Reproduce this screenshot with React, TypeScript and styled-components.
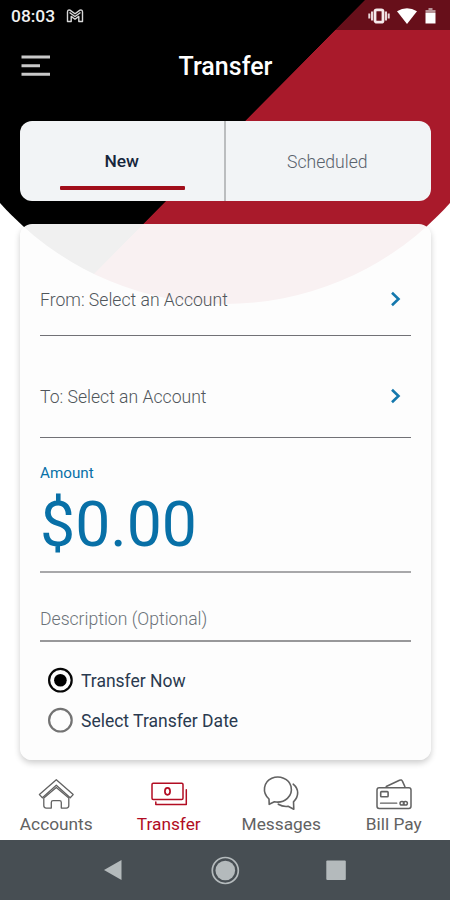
import React from "react";
import styled, { createGlobalStyle } from "styled-components";

const GlobalStyle = createGlobalStyle`
  * { box-sizing: border-box; }
  body { margin: 0; background: #fff; font-family: Roboto, sans-serif; }
  svg { display: block; flex: none; }
`;

const Screen = styled.div`
  position: relative;
  width: 450px;
  height: 900px;
  overflow: hidden;
  background: #fff;
  display: flex;
  flex-direction: column;
`;

const Backdrop = styled.div`
  position: absolute;
  left: -76px;
  top: -298px;
  width: 602px;
  height: 602px;
  border-radius: 50%;
  background: linear-gradient(134.7deg, #000 61.4%, #a91a2b 61.48%);
`;

const StatusBar = styled.div`
  position: relative;
  height: 30px;
  flex: none;
  padding: 2px 12px 0 11px;
  display: flex;
  align-items: center;
  background: rgba(0, 0, 0, 0.39);
  color: #fff;
`;

const Clock = styled.span`
  font-size: 17.4px;
  line-height: 28px;
  font-weight: 500;
  width: 55px;
  color: #f1f1f1;
`;

const StatusIcons = styled.div`
  margin-left: auto;
  display: flex;
  align-items: center;
  gap: 7px;
`;

const Header = styled.header`
  position: relative;
  height: 91px;
  flex: none;
  display: grid;
  grid-template-columns: 30px 1fr 30px;
  padding: 16px 20px 0 21px;
`;

const MenuButton = styled.button`
  border: 0;
  padding: 0;
  background: none;
  width: 30px;
  height: 40px;
  display: flex;
  align-items: center;
`;

const Title = styled.h1`
  margin: 0;
  text-align: center;
  font-size: 25px;
  line-height: 41px;
  font-weight: 500;
  color: #fff;
`;

const Tabs = styled.div`
  position: relative;
  flex: none;
  margin: 0 19px 0 20px;
  height: 80px;
  display: flex;
  border-radius: 12px;
  overflow: hidden;
  background: #f2f4f6;
`;

const Tab = styled.button<{ $active?: boolean }>`
  flex: 1;
  border: 0;
  padding: 0;
  background: none;
  display: flex;
  flex-direction: column;
  align-items: center;
  font-family: inherit;
  font-size: ${(p) => (p.$active ? "17.4px" : "17.6px")};
  line-height: 20px;
  padding-top: ${(p) => (p.$active ? 30 : 31)}px;
  font-weight: ${(p) => (p.$active ? 500 : 300)};
  color: ${(p) => (p.$active ? "#17263c" : "#59626c")};
  & + & { border-left: 2px solid #bbbdbf; padding-right: 2px; }
`;

const TabMarker = styled.span`
  width: 125px;
  height: 4px;
  border-radius: 1px;
  margin: 15px 0 0 2px;
  background: #a10e1a;
`;

const Card = styled.main`
  position: relative;
  flex: none;
  margin: 23px 19px 0 20px;
  height: 536px;
  padding: 0 20px;
  border-radius: 12px;
  background: rgba(253, 253, 253, 0.95);
  box-shadow: 0 3px 6px rgba(0, 0, 0, 0.2);
  clip-path: inset(0 -10px -12px -10px);
`;

const AccountRow = styled.div<{ $height: number; $pad: number }>`
  height: ${(p) => p.$height}px;
  padding: ${(p) => p.$pad}px 9px 0 0;
  display: flex;
  justify-content: space-between;
  border-bottom: 1.5px solid #717176;
  font-size: 17.6px;
  line-height: 22px;
  font-weight: 300;
  color: #50565b;
  svg { margin-top: 1px; }
`;

const AmountField = styled.div`
  height: 135px;
  padding-top: 25px;
  border-bottom: 2px solid #a8a8aa;
  color: #0870a7;
`;

const AmountLabel = styled.div`
  font-size: 15.2px;
  line-height: 20px;
`;

const AmountValue = styled.div`
  font-size: 62.5px;
  line-height: 72px;
  margin-top: 6px;
`;

const DescriptionField = styled.div`
  height: 69px;
  padding-top: 35px;
  border-bottom: 2px solid #98989a;
  font-size: 17.6px;
  line-height: 22px;
  font-weight: 300;
  color: #6b7278;
`;

const Options = styled.div`
  padding: 18px 0 0 7px;
`;

const Option = styled.label`
  height: 40px;
  display: flex;
  align-items: center;
  gap: 8px;
  font-size: 17.5px;
  line-height: 22px;
  color: #2a3a4f;
  span { padding-top: 2px; }
`;

const BottomTabs = styled.nav`
  position: relative;
  height: 80px;
  flex: none;
  display: grid;
  grid-template-columns: repeat(4, 1fr);
`;

const BottomTab = styled.a<{ $active?: boolean }>`
  display: flex;
  flex-direction: column;
  align-items: center;
  padding-top: 14px;
  font-size: 17.3px;
  line-height: 20px;
  color: ${(p) => (p.$active ? "#b20d23" : "#626262")};
  svg { margin-bottom: 1px; }
`;

const SystemBar = styled.footer`
  height: 60px;
  flex: none;
  display: grid;
  grid-template-columns: repeat(3, 111px);
  justify-content: center;
  justify-items: center;
  align-items: center;
  background: #474e53;
`;

const Chevron = () => (
  <svg width="12" height="18" viewBox="0 0 12 18" fill="none" stroke="#1478ad" strokeWidth="2.6">
    <path d="M2 2.7 8.5 9 2 15.3" />
  </svg>
);

const Radio = ({ checked }: { checked?: boolean }) => (
  <svg width="26" height="26" viewBox="0 0 26 26" fill="none">
    <circle cx="13.4" cy="13.2" r="11.3" stroke={checked ? "#070707" : "#737373"} strokeWidth="2.2" />
    {checked && <circle cx="13.4" cy="13.2" r="6.3" fill="#000" />}
  </svg>
);

const line = { fill: "none", stroke: "currentColor", strokeLinejoin: "round", strokeLinecap: "round" } as const;

const HouseIcon = () => (
  <svg width="38" height="39" viewBox="0 0 38 39" {...line} strokeWidth="1.3">
    <path d="M19.3 5.7 2.4 20.6l3 3.2L19.3 11.2l13.9 12.6 3-3.2Z" />
    <path d="M6.8 24v7.6q0 2.5 2.5 2.5h5v-5.7q0-1.8 1.8-1.8h6.4q1.8 0 1.8 1.8v5.7h5q2.5 0 2.5-2.5V24L19.3 13.4Z" />
  </svg>
);

const CashIcon = () => (
  <svg width="38" height="39" viewBox="0 0 38 39" {...line} strokeWidth="1.5">
    <rect x="2" y="9.2" width="31" height="16.2" rx="1.2" />
    <ellipse cx="17.5" cy="17.3" rx="2.6" ry="3.5" strokeWidth="1.7" />
    <path d="M36.3 15.8v14.6H5.8v-2.4" />
  </svg>
);

const ChatIcon = () => (
  <svg width="38" height="39" viewBox="0 0 38 39" {...line} strokeWidth="1.6">
    <path d="M7 25C-.2 18.7 1.4 8 9.8 4.3c7.6-3.3 17.3.2 19.2 8.1 2.2 9.6-6.2 17.2-16.6 15.4L7.2 30.3Z" />
    <path d="M31.2 10.2c5.8 4.8 6 12.2.3 17.6l.3 7.4-5.7-2.9c-4 .5-7.2-.5-9.8-2.1" />
  </svg>
);

const CardsIcon = () => (
  <svg width="38" height="39" viewBox="0 0 38 39" {...line} strokeWidth="1.5">
    <rect x="2" y="13.7" width="34" height="20.8" rx="2.2" />
    <path d="M11.2 12.5 24.5 6.3q2.2-1 3 1.1l2.4 5.2" />
    <rect x="5.7" y="17.6" width="7.4" height="5.2" rx=".8" strokeWidth="1.6" />
    <path d="M5.5 29.2h16.3" strokeWidth="1.2" />
    <rect x="25" y="27.4" width="4" height="3.7" rx="1.8" />
    <rect x="28.4" y="27.4" width="4" height="3.7" rx="1.8" />
  </svg>
);

const destinations = [
  { label: "Accounts", Icon: HouseIcon },
  { label: "Transfer", Icon: CashIcon, active: true },
  { label: "Messages", Icon: ChatIcon },
  { label: "Bill Pay", Icon: CardsIcon },
];

export default function App() {
  return (
    <Screen>
      <GlobalStyle />
      <Backdrop />
      <StatusBar>
        <Clock>08:03</Clock>
        <svg width="18" height="14" viewBox="0 0 18 14" fill="none" stroke="#d8d8d8" strokeWidth="1.4" strokeLinejoin="round">
          <path d="M1.5 3q0-2.6 2.5-1.9l5 3.7 5-3.7q2.5-.7 2.5 1.9v9.5h-3.7V7.4L9 10.2 5.2 7.4v5.1H1.5Z" />
          <path d="m3.5 3.5 5.5 4 5.5-4" />
        </svg>
        <StatusIcons>
          <svg width="22" height="16" viewBox="0 0 22 16">
            <path d="M1.3 5.4v5.2M4 3.4v9.2M18 3.4v9.2M20.7 5.4v5.2" stroke="#ead8da" strokeWidth="2" />
            <rect x="7" y="1.8" width="8" height="12.4" rx="1.8" fill="none" stroke="#f5eaeb" strokeWidth="2.8" />
          </svg>
          <svg width="20" height="16" viewBox="0 0 20 16" fill="#fff">
            <path d="M0 3.2Q10-2.8 20 3.2L10 16Z" />
          </svg>
          <svg width="14" height="18" viewBox="0 0 14 18">
            <path d="M4.5 1h4v2h-4ZM1.5 3h10v3h-10Z" fill="#b99599" />
            <path d="M1.5 6h10v10.5h-10Z" fill="#fff" />
          </svg>
        </StatusIcons>
      </StatusBar>
      <Header>
        <MenuButton aria-label="Menu">
          <svg width="30" height="22" viewBox="0 0 30 22" stroke="#c9c9c9" strokeWidth="3">
            <path d="M.5 2h28.5M.5 10.8h18.5M.5 19.3h28.5" />
          </svg>
        </MenuButton>
        <Title>Transfer</Title>
      </Header>
      <Tabs>
        <Tab $active>New<TabMarker /></Tab>
        <Tab>Scheduled</Tab>
      </Tabs>
      <Card>
        <AccountRow $height={112} $pad={65}><span>From: Select an Account</span><Chevron /></AccountRow>
        <AccountRow $height={102} $pad={50}><span>To: Select an Account</span><Chevron /></AccountRow>
        <AmountField>
          <AmountLabel>Amount</AmountLabel>
          <AmountValue>$0.00</AmountValue>
        </AmountField>
        <DescriptionField>Description (Optional)</DescriptionField>
        <Options>
          <Option><Radio checked /><span>Transfer Now</span></Option>
          <Option><Radio /><span>Select Transfer Date</span></Option>
        </Options>
      </Card>
      <BottomTabs>
        {destinations.map(({ label, Icon, active }) => (
          <BottomTab key={label} $active={active}><Icon />{label}</BottomTab>
        ))}
      </BottomTabs>
      <SystemBar>
        <svg width="22" height="22" viewBox="0 0 22 22"><path d="M1 11 18.5 1v20Z" fill="#b4babc" /></svg>
        <svg width="30" height="30" viewBox="0 0 30 30">
          <circle cx="15.3" cy="15.5" r="13" fill="none" stroke="#b4babc" strokeWidth="1.7" />
          <circle cx="15.3" cy="15.5" r="9.8" fill="#b4babc" />
        </svg>
        <svg width="22" height="22" viewBox="0 0 22 22"><rect x="1.3" y="1.5" width="19.5" height="19.5" rx="1" fill="#b4babc" /></svg>
      </SystemBar>
    </Screen>
  );
}
